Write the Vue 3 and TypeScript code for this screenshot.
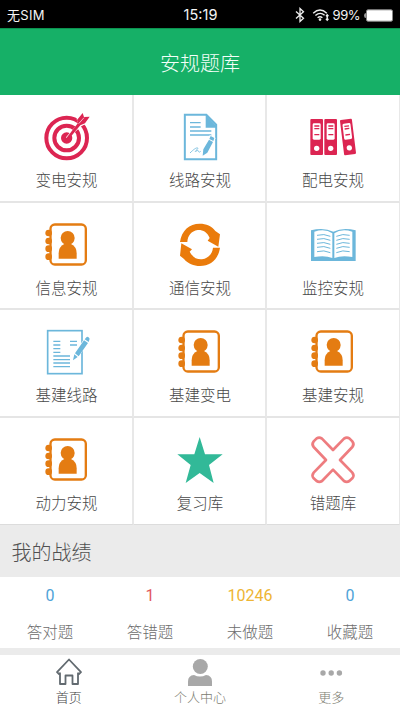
<script setup lang="ts">
type IconName = 'target' | 'contract' | 'binders' | 'contact' | 'cycle' | 'book' | 'form' | 'star' | 'cross'

interface Entry {
  label: string
  icon: IconName
}

const entries: Entry[] = [
  { label: '变电安规', icon: 'target' },
  { label: '线路安规', icon: 'contract' },
  { label: '配电安规', icon: 'binders' },
  { label: '信息安规', icon: 'contact' },
  { label: '通信安规', icon: 'cycle' },
  { label: '监控安规', icon: 'book' },
  { label: '基建线路', icon: 'form' },
  { label: '基建变电', icon: 'contact' },
  { label: '基建安规', icon: 'contact' },
  { label: '动力安规', icon: 'contact' },
  { label: '复习库', icon: 'star' },
  { label: '错题库', icon: 'cross' },
]

const stats = [
  { value: 0, label: '答对题', tone: 'blue' },
  { value: 1, label: '答错题', tone: 'red' },
  { value: 10246, label: '未做题', tone: 'yellow' },
  { value: 0, label: '收藏题', tone: 'blue' },
]

const bookLines = [97, 109, 121, 133, 146]
</script>

<template>
  <div class="screen">
    <div class="status">
      <span class="carrier">无SIM</span>
      <span class="clock">15:19</span>
      <div class="indicators">
        <svg class="bluetooth" viewBox="0 0 10 16"><path d="M1 4.5 8.5 11.3 5 14.5V1.5L8.5 4.7 1 11.5" /></svg>
        <svg class="wifi" viewBox="0 0 18 14">
          <path d="M1.2 5.2Q8 -1.2 14.8 5.2M3.4 7.6Q8 3.4 12.6 7.2M5.6 9.8Q8 7.8 10.4 9.8" />
          <circle cx="8" cy="11.6" r="1.3" />
          <path d="M15.2 7v5M14 8.2 15.2 6.8 16.4 8.2M14 10.8 15.2 12.2 16.4 10.8" />
        </svg>
        <span class="percent">99%</span>
        <svg class="battery" viewBox="0 0 30 13"><path class="nub" d="M2 4Q0 4 0 6.5T2 9Z" /><rect x="2.5" y=".8" width="26" height="11.4" rx="1.5" /></svg>
      </div>
    </div>

    <header class="title">安规题库</header>

    <main class="grid">
      <div v-for="entry in entries" :key="entry.label" class="cell">
        <svg class="icon" :class="entry.icon" viewBox="129 42 144 144">
          <g v-if="entry.icon === 'target'">
            <circle class="ring" cx="200" cy="129" r="61" />
            <circle class="ring" cx="200" cy="129" r="37" />
            <circle class="fill" cx="200" cy="129" r="17" />
            <path class="halo" d="M200 129 238 86 233 72 247 55 252 67 268 66 254 85 243 91Z" />
            <path class="fill" d="M197 132 234 84 231 75 248 54 252 66 269 65 255 85 241 91 204 135Z" />
            <path class="slit" d="M236 86 252 68" />
          </g>
          <g v-else-if="entry.icon === 'contract'">
            <path class="sheet" d="M155.500 59.500H220L249.500 89V192.500H155.500Z" />
            <path class="fill" d="M218 59 251 94V98H218Z" />
            <path class="rule" d="M171 83H203M171 96H203M171 108H235M171 120H235" />
            <path class="scrawl" d="M171 174C181 164 190 157 194 159S182 171 188 169 194 164 195 167 199 174 203 169" />
            <path class="halo" d="M209 182 212 164 232 124 244 130 223 170Z" />
            <path class="fill" d="M209 182 211 163 228 134 240 141 223 173ZM229 132 233 123 244 129 241 138Z" />
          </g>
          <g v-else-if="entry.icon === 'binders'">
            <g v-for="x in [133, 175]" :key="x">
              <rect class="fill" :x="x" y="72" width="38" height="108" rx="3" />
              <rect class="hole" :x="x + 7" y="85" width="24" height="49" rx="4" />
              <path class="rule" :d="`M${x + 12} 93h15M${x + 12} 101h15M${x + 12} 119h15`" />
              <circle class="hole" :cx="x + 19" cy="160" r="8" />
            </g>
            <g transform="rotate(-7 246 126)">
              <rect class="fill" x="228" y="73" width="36" height="106" rx="3" />
              <rect class="hole" x="234" y="85" width="24" height="48" rx="4" />
              <path class="rule" d="M239 93h14M239 101h14M239 119h14" />
              <circle class="hole" cx="246" cy="159" r="8" />
            </g>
          </g>
          <g v-else-if="entry.icon === 'contact'">
            <circle v-for="y in [90, 114, 137, 161]" :key="y" class="fill" cx="146" :cy="y" r="10" />
            <rect class="frame" x="151.500" y="64.500" width="106" height="120" rx="13" />
            <circle class="fill" cx="203" cy="105" r="21" />
            <path class="fill" d="M176 167V151Q176 131 193 123H213Q230 131 230 151V167Z" />
          </g>
          <g v-else-if="entry.icon === 'cycle'">
            <path class="fill" d="M141 117C146 82 169 62 200 62C220 62 236 69 247 84L261 94L256 131L224 113L230 105C222 86 209 80 194 81C175 84 164 98 163 117Z" />
            <path class="fill" d="M261 134C256 169 232 189 201 189C182 189 165 182 153 168L141 158L145 121L177 139L170 146C180 164 192 170 207 169C225 166 238 153 240 134Z" />
          </g>
          <g v-else-if="entry.icon === 'book'">
            <path class="fill" d="M135 82Q174 73 202 86Q230 73 269 82V174H135Z" />
            <path class="hole" d="M145 86Q178 76 199 91V165Q177 156 145 162ZM205 91Q226 76 259 86V162Q227 156 205 165Z" />
            <path v-for="y in bookLines" :key="y" class="rule" :d="`M153 ${y}Q174 ${y - 6} 193 ${y + 3}M211 ${y + 3}Q230 ${y - 6} 251 ${y}`" />
          </g>
          <g v-else-if="entry.icon === 'form'">
            <rect class="sheet" x="143" y="62" width="103" height="129" />
            <path class="rule" d="M160 94H181M160 105H181M160 116H181M160 127H181M210 94H231M210 105H231M160 138H210M160 149H210M160 159H210M160 170H210" />
            <path class="halo" d="M219 151 223 134 260 81 269 87 231 142Z" />
            <path class="fill" d="M219 151 223 133 233 141ZM225 130 252 91 264 99 236 139ZM254 88 260 81Q265 79 269 86L266 96Z" />
          </g>
          <path v-else-if="entry.icon === 'star'" class="fill" d="M200 57 216 109H269L228 141 242 195 200 165 158 195 173 141 133 109H184Z" />
          <path v-else class="outline" d="M152 61Q160 56 168 62L201 96 234 62Q242 56 250 61L259 70Q266 79 259 87L222 126 259 164Q266 173 259 181L250 189Q242 194 234 189L201 155 168 189Q160 194 152 189L143 181Q136 173 143 164L180 126 143 87Q136 79 143 70Z" />
        </svg>
        <span class="label">{{ entry.label }}</span>
      </div>
    </main>

    <h2 class="section">我的战绩</h2>

    <section class="stats">
      <div v-for="stat in stats" :key="stat.label" class="stat">
        <span class="value" :class="stat.tone">{{ stat.value }}</span>
        <span class="caption">{{ stat.label }}</span>
      </div>
    </section>

    <nav class="tabs">
      <div class="tab active">
        <svg class="tab-icon home" viewBox="0 0 28 28"><path d="M14 1.500 26 14.200 24 16 23 15.200V26H17.500V17.500H10.500V26H5V15.200L4 16 2 14.200Z" /></svg>
        <span>首页</span>
      </div>
      <div class="tab">
        <svg class="tab-icon" viewBox="0 0 28 28"><circle cx="14.300" cy="8.500" r="7.500" /><path d="M2 28V23.500Q2 17.500 8 17Q14 20 20 17Q26 17.500 26 23.500V28Z" /></svg>
        <span>个人中心</span>
      </div>
      <div class="tab">
        <svg class="tab-icon" viewBox="0 0 28 28"><circle cx="6" cy="15" r="2.700" /><circle cx="14.200" cy="15" r="2.700" /><circle cx="22.400" cy="15" r="2.700" /></svg>
        <span>更多</span>
      </div>
    </nav>
  </div>
</template>

<style>
body {
  margin: 0;
  background: #fff;
}
</style>

<style scoped>
.screen {
  width: 400px;
  height: 710px;
  overflow: hidden;
  display: flex;
  flex-direction: column;
  background: #fff;
  font-family: "Noto Sans CJK SC", sans-serif;
  font-weight: 300;
}

.status {
  flex: none;
  height: 28px;
  box-sizing: border-box;
  padding: 2px 6px 0 7px;
  display: grid;
  grid-template-columns: 1fr auto 1fr;
  align-items: center;
  background: #000;
  color: #f4f4f4;
  font-family: Inter, "Noto Sans CJK SC", sans-serif;
  font-size: 13px;
  font-weight: 400;
  line-height: 20px;
}

.carrier {
  letter-spacing: 0.3px;
}

.clock {
  font-size: 14.5px;
}

.indicators {
  display: flex;
  align-items: center;
  justify-content: flex-end;
}

.bluetooth {
  width: 10px;
  height: 16px;
  margin-right: 7px;
  fill: none;
  stroke: #eee;
  stroke-width: 1.3;
}

.wifi {
  width: 18px;
  height: 14px;
  margin-right: 3px;
  fill: #eee;
}

.wifi path {
  fill: none;
  stroke: #eee;
  stroke-width: 1.4;
}

.percent {
  margin-right: 4px;
  letter-spacing: -0.5px;
}

.battery {
  width: 30px;
  height: 13px;
}

.battery rect {
  fill: #fff;
  stroke: #888;
}

.nub {
  fill: #999;
}

.title {
  flex: none;
  height: 67px;
  box-sizing: border-box;
  padding-top: 1px;
  border-top: 1px solid #0b9350;
  background: #16b067;
  color: #f4fff9;
  font-size: 20px;
  line-height: 65px;
  text-align: center;
}

.grid {
  flex: none;
  display: grid;
  grid-template-columns: 134px 133px 133px;
  grid-template-rows: 108px 107px 108px 107px;
}

.cell {
  box-sizing: border-box;
  padding: 14px 0 0 1px;
  border-right: 2px solid #e8e8e8;
  border-bottom: 2px solid #e5e5e5;
  display: flex;
  flex-direction: column;
  align-items: center;
}

.cell:nth-child(3n) {
  padding-left: 0;
  border-right-width: 1px;
}

.cell:nth-child(n + 10) {
  border-bottom: 1px solid #dcdcdc;
}

.icon {
  width: 48px;
  height: 48px;
  overflow: visible;
}

.fill {
  fill: currentColor;
}

.hole {
  fill: #fff;
}

.ring,
.sheet,
.frame,
.rule,
.scrawl,
.outline {
  fill: none;
  stroke: currentColor;
}

.halo {
  fill: #fff;
  stroke: #fff;
  stroke-width: 6;
}

.target,
.binders {
  color: #dc2552;
}

.ring {
  stroke-width: 12;
}

.slit {
  fill: none;
  stroke: #fff;
  stroke-width: 2;
}

.contract,
.book,
.form {
  color: #6cb7db;
}

.sheet {
  stroke-width: 5;
}

.contract .sheet {
  stroke-width: 6;
}

.rule {
  stroke-width: 4;
}

.book .rule {
  stroke-width: 3;
}

.scrawl {
  stroke-width: 2.5;
}

.contact {
  color: #e47c12;
}

.frame {
  stroke-width: 7;
}

.cycle {
  color: #ea7b0b;
}

.star {
  color: #32b998;
}

.cross {
  color: #ee7c7f;
}

.outline {
  stroke-width: 8;
  stroke-linejoin: round;
}

.label {
  margin-top: 10px;
  color: #484848;
  font-size: 15.5px;
  line-height: 24px;
}

.section {
  flex: none;
  height: 52px;
  box-sizing: border-box;
  margin: 0;
  padding-left: 11.5px;
  background: #ebebeb;
  color: #505050;
  font-size: 20px;
  font-weight: 300;
  line-height: 54px;
}

.stats {
  flex: none;
  height: 71px;
  display: grid;
  grid-template-columns: repeat(4, 1fr);
}

.stat {
  padding-top: 7px;
  display: flex;
  flex-direction: column;
  align-items: center;
}

.value {
  font-family: Roboto, sans-serif;
  font-size: 16px;
  font-weight: 400;
  line-height: 24px;
}

.blue {
  color: #4fa3d8;
}

.red {
  color: #e2575e;
}

.yellow {
  color: #eeb534;
}

.caption {
  margin-top: 11px;
  color: #6c6c6c;
  font-size: 15.5px;
  line-height: 24px;
}

.tabs {
  flex: none;
  height: 62px;
  box-sizing: border-box;
  padding: 3px 3px 0;
  border-top: 7px solid #ebebeb;
  display: grid;
  grid-template-columns: repeat(3, 1fr);
}

.tab {
  display: flex;
  flex-direction: column;
  align-items: center;
  color: #7c7c70;
  font-size: 13px;
  line-height: 20px;
}

.active {
  color: #444;
}

.tab-icon {
  width: 28px;
  height: 28px;
  margin-bottom: 1px;
  fill: #a8a8a8;
}

.home path {
  fill: none;
  stroke: #626a70;
  stroke-width: 1.8;
  stroke-linejoin: round;
}
</style>
